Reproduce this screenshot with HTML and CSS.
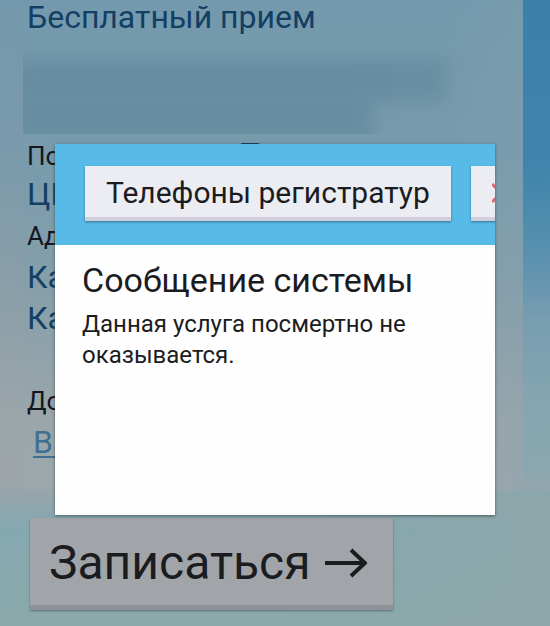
FILE: index.html
```html
<!DOCTYPE html>
<html lang="ru">
<head>
<meta charset="utf-8">
<meta name="viewport" content="width=device-width, initial-scale=1">
<title>Запись на прием</title>
<link rel="stylesheet" href="styles.css">
</head>
<body>
<main class="page">
  <section class="card">
    <p class="value service">Бесплатный прием</p>
    <div class="redacted" aria-hidden="true">
      <div class="smudge smudge-long"></div>
      <div class="smudge"></div>
    </div>
    <p class="label split"><span>По</span><span class="value">Т</span></p>
    <p class="value">ЦР</p>
    <p class="label">Ад</p>
    <p class="value">Ка</p>
    <p class="value">Ка</p>
    <p class="label extra">До</p>
    <p class="value"><a class="more" href="#">В </a></p>
  </section>
  <button class="submit" type="button">
    <span>Записаться</span>
    <svg class="arrow" viewBox="0 0 42 30" aria-hidden="true"><path d="M0 15H40M26 2L40 15L26 28"/></svg>
  </button>
</main>
<div class="dialog" role="dialog" aria-labelledby="dialog-title">
  <header class="bar">
    <button class="tool" type="button">Телефоны регистратур</button>
    <button class="tool" type="button" aria-label="Закрыть">
      <svg class="cross" viewBox="0 0 20 20" aria-hidden="true"><path d="M0 1L18 19M18 1L0 19"/></svg>
    </button>
  </header>
  <div class="message">
    <h1 class="title" id="dialog-title">Сообщение системы</h1>
    <p class="text">Данная услуга посмертно не оказывается.</p>
  </div>
</div>
</body>
</html>
```
FILE: styles.css
```css
* {
  box-sizing: border-box;
}

html {
  min-height: 100%;
  background:
    linear-gradient(#3a80a9 0, #4085ac 170px, #5890af 250px, #779db0 320px, #85a5b0 400px, #8aa7b0 470px, rgba(139, 169, 172, 0) 500px) right / 40px 100% no-repeat,
    linear-gradient(to right, transparent 50%, #8ca7aa 100%) bottom / 100% 136px no-repeat,
    linear-gradient(#7498ab 0, #7a9aac 150px, #8b9fa8 300px, #9ca6aa 420px, #9da5a8 480px, #85a8b1 525px, #8ba9aa 100%);
}

body,
p,
h1 {
  margin: 0;
}

body {
  font-family: Roboto, "Liberation Sans", sans-serif;
  color: #1b1c1f;
}

button {
  border: 0;
  font: inherit;
  color: inherit;
}

.page {
  padding: 0 27px 16px 23px;
}

.card {
  min-height: 489px;
  padding-left: 4px;
  overflow: hidden;
  background:
    linear-gradient(to right, transparent 85%, rgba(130, 160, 178, 0.25)),
    linear-gradient(#7499ac 0, #799bac 160px, #869faa 290px, #9ba6aa 420px, #9ca8ac 100%);
}

.label {
  font-size: 26px;
  line-height: 42px;
  color: #12171f;
}

.value {
  font-size: 32px;
  line-height: 41px;
  color: #123f63;
}

.service {
  line-height: 35px;
}

.redacted {
  height: 87px;
  margin: 12px 0 0 -4px;
  padding-top: 12px;
  overflow: hidden;
}

.smudge {
  width: 362px;
  height: 66px;
  margin: -18px 0 0 -12px;
  background: #688da1;
  filter: blur(9px);
}

.smudge-long {
  width: 434px;
  height: 42px;
  margin-top: 0;
}

.split {
  display: flex;
  align-items: baseline;
  gap: 180px;
  height: 40px;
}

.extra {
  margin-top: 41px;
}

.more {
  display: inline-block;
  margin-left: 6px;
  padding-right: 10px;
  color: #416f92;
  text-decoration-thickness: 2px;
  text-underline-offset: 3px;
  white-space: pre;
}

.submit {
  display: flex;
  align-items: center;
  gap: 14px;
  margin: 29px 0 0 7px;
  padding: 2px 26px 0 19px;
  height: 92px;
  font-size: 48px;
  background: #a1a4a8;
  border-bottom: 5px solid #8e9297;
  box-shadow: 0 1px 2px #596f78;
}

.arrow {
  width: 42px;
  height: 30px;
  fill: none;
  stroke: currentColor;
  stroke-width: 4;
}

/* The dialog floats over the page. */
.dialog {
  position: absolute;
  top: 144px;
  left: 10%;
  right: 10%;
  min-height: 371px;
  overflow: hidden;
  background: #fefefe;
  box-shadow: 0 1px 3px rgba(40, 60, 70, 0.7);
}

.bar {
  display: flex;
  gap: 20px;
  padding: 22px 0 24px 30px;
  background: #58bae7;
}

.tool {
  flex: none;
  height: 55px;
  padding: 2px 21px 0;
  font-size: 30px;
  white-space: nowrap;
  background: #ebedf2;
  border-bottom: 4px solid #cfd0dc;
  box-shadow: 0 1px 2px #35708f;
}

.cross {
  display: block;
  width: 20px;
  height: 20px;
  fill: none;
  stroke: #dc6975;
  stroke-width: 3;
}

.message {
  padding: 14px 27px;
}

.title {
  font-size: 34px;
  font-weight: 400;
  line-height: 42px;
}

.text {
  margin-top: 8px;
  font-size: 24px;
  line-height: 31px;
}
```
